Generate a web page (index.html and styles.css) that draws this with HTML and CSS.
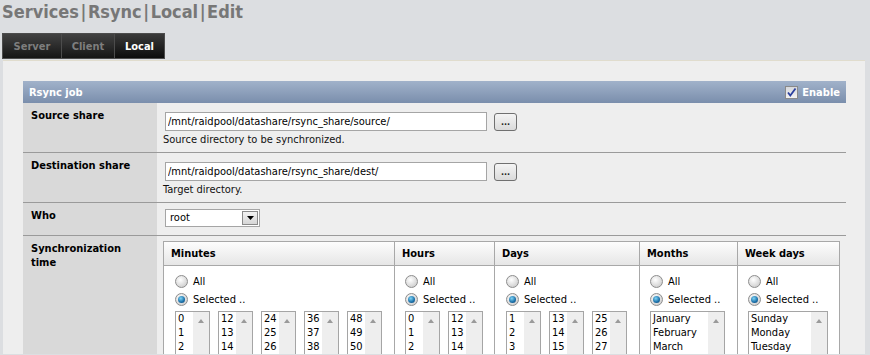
FILE: index.html
```html
<!DOCTYPE html>
<html>
  <head>
    <meta charset="UTF-8" />
    <title>Services | Rsync | Local | Edit</title>
    <link rel="stylesheet" href="styles.css">
  </head>
  <body>
    <h1 class="page-title">Services<span class="sep">|</span>Rsync<span class="sep">|</span>Local<span class="sep">|</span>Edit</h1>

    <div class="tabs">
      <a class="tab tab-server">Server</a>
      <a class="tab tab-client">Client</a>
      <a class="tab tab-local active">Local</a>
    </div>

    <div class="panel">
      <div class="form">
        <div class="form-header">
          <span>Rsync job</span>
          <span class="enable">
            <span class="checkbox">
              <svg width="11" height="11" viewBox="0 0 11 11"><path d="M2 5.5 L4.3 8.5 L9.5 1.5" fill="none" stroke="#2a3f9e" stroke-width="1.8"/></svg>
            </span>
            Enable
          </span>
        </div>

        <div class="row">
          <div class="label">Source share</div>
          <div class="value">
            <div class="path-line">
              <input type="text" class="path" value="/mnt/raidpool/datashare/rsync_share/source/">
              <button class="browse">...</button>
            </div>
            <div class="help">Source directory to be synchronized.</div>
          </div>
        </div>

        <div class="row">
          <div class="label">Destination share</div>
          <div class="value">
            <div class="path-line">
              <input type="text" class="path" value="/mnt/raidpool/datashare/rsync_share/dest/">
              <button class="browse">...</button>
            </div>
            <div class="help">Target directory.</div>
          </div>
        </div>

        <div class="row">
          <div class="label">Who</div>
          <div class="value value-who">
            <div class="select">
              <span class="select-text">root</span>
              <span class="select-btn">
                <svg width="7" height="4" viewBox="0 0 7 4"><path d="M0 0 H7 L3.5 4 Z" fill="#000"/></svg>
              </span>
            </div>
          </div>
        </div>

        <div class="row row-last">
          <div class="label">Synchronization time</div>
          <div class="value value-sched">
            <div class="sched">
              <div class="col col-minutes">
                <div class="col-head">Minutes</div>
                <div class="col-body">
                  <div class="opt"><span class="radio"></span>All</div>
                  <div class="opt"><span class="radio on"></span>Selected ..</div>
                  <div class="lists" data-kind="minutes"></div>
                </div>
              </div>
              <div class="col col-hours">
                <div class="col-head">Hours</div>
                <div class="col-body">
                  <div class="opt"><span class="radio"></span>All</div>
                  <div class="opt"><span class="radio on"></span>Selected ..</div>
                  <div class="lists" data-kind="hours"></div>
                </div>
              </div>
              <div class="col col-days">
                <div class="col-head">Days</div>
                <div class="col-body">
                  <div class="opt"><span class="radio"></span>All</div>
                  <div class="opt"><span class="radio on"></span>Selected ..</div>
                  <div class="lists" data-kind="days"></div>
                </div>
              </div>
              <div class="col col-months">
                <div class="col-head">Months</div>
                <div class="col-body">
                  <div class="opt"><span class="radio"></span>All</div>
                  <div class="opt"><span class="radio on"></span>Selected ..</div>
                  <div class="lists" data-kind="months"></div>
                </div>
              </div>
              <div class="col col-weekdays">
                <div class="col-head">Week days</div>
                <div class="col-body">
                  <div class="opt"><span class="radio"></span>All</div>
                  <div class="opt"><span class="radio on"></span>Selected ..</div>
                  <div class="lists" data-kind="weekdays"></div>
                </div>
              </div>
            </div>
          </div>
        </div>
      </div>
    </div>

    <script type="text/javascript">
      function range(from, to) {
        const out = [];
        for (let i = from; i <= to; i++) {
          out.push(String(i));
        }
        return out;
      }

      // each entry is one listbox
      const groups = {
        minutes: [range(0, 11), range(12, 23), range(24, 35), range(36, 47), range(48, 59)],
        hours: [range(0, 11), range(12, 23)],
        days: [range(1, 12), range(13, 24), range(25, 31)],
        months: [["January", "February", "March", "April", "May", "June", "July",
                  "August", "September", "October", "November", "December"]],
        weekdays: [["Sunday", "Monday", "Tuesday", "Wednesday", "Thursday", "Friday", "Saturday"]]
      };

      document.querySelectorAll(".lists").forEach((holder) => {
        groups[holder.dataset.kind].forEach((items) => {
          const box = document.createElement("div");
          box.className = "listbox";
          const sel = document.createElement("select");
          sel.multiple = true;
          sel.size = 3;
          items.forEach((item) => {
            const opt = document.createElement("option");
            opt.textContent = item;
            sel.appendChild(opt);
          });
          box.appendChild(sel);
          const bar = document.createElement("div");
          bar.className = "scrollbar";
          bar.innerHTML = '<span class="arrow"></span>';
          box.appendChild(bar);
          holder.appendChild(box);
        });
      });
    </script>
  </body>
</html>
```

FILE: styles.css
```css
body, html {
    margin: 0;
    padding: 0;
}

body {
    background-color: #dcdee1;
    font-family: "DejaVu Sans Condensed", "DejaVu Sans", sans-serif;
    font-size: 11px;
    color: #000;
}

.page-title {
    margin: 0;
    height: 33px;
    padding: 1px 0 0 2px;
    box-sizing: border-box;
    font-size: 18px;
    line-height: 22px;
    font-weight: bold;
    color: #777;
}

.page-title .sep {
    margin: 0 1.5px;
}

/* tabs */
.tabs {
    display: flex;
    margin-left: 2px;
    height: 26px;
}

.tab {
    display: flex;
    align-items: center;
    justify-content: center;
    box-sizing: border-box;
    height: 26px;
    border: 1px solid #4c4c4c;
    border-left: none;
    background: linear-gradient(#424242, #151515);
    color: #7e7e7e;
    font-weight: bold;
}

.tab-server {
    width: 60px;
    border-left: 1px solid #4c4c4c;
}

.tab-client {
    width: 53px;
}

.tab-local {
    width: 50px;
}

.tab.active {
    color: #fff;
    background: linear-gradient(#3a3a3a, #0c0c0c);
}

/* main panel */
.panel {
    margin: 1px 0 0 3px;
    width: 862px;
    height: 294px;
    box-sizing: border-box;
    padding: 20px 0 0 20px;
    background-color: #eeeeee;
    border-top: 1px solid #e0dccd;
}

.form {
    width: 823px;
}

.form-header {
    display: flex;
    justify-content: space-between;
    align-items: center;
    height: 22px;
    padding: 0 6px;
    background: linear-gradient(#a1b2ca, #7a8eac);
    color: #fff;
    font-weight: bold;
}

.enable {
    display: flex;
    align-items: center;
    gap: 4px;
}

.checkbox {
    display: flex;
    align-items: center;
    justify-content: center;
    width: 11px;
    height: 11px;
    border: 1px solid #8a8a8a;
    background: linear-gradient(#d6d8dc, #f2f2f2);
}

.row {
    display: grid;
    grid-template-columns: 134px 1fr;
    border-bottom: 1px solid #9a9a9a;
}

.row-last {
    border-bottom: none;
}

.label {
    background-color: #d9d9d9;
    font-weight: bold;
    line-height: 14px;
    padding: 6px 8px;
}

.value {
    padding: 9px 6px 5px;
}

.path-line {
    display: flex;
    align-items: center;
    gap: 7px;
}

.path {
    margin: 0 0 0 2px;
    width: 322px;
    height: 19px;
    box-sizing: border-box;
    padding: 0 2px;
    border: 1px solid #a5a5a5;
    background: #fff;
    font: inherit;
    color: #000;
}

.browse {
    width: 23px;
    height: 18px;
    padding: 0;
    border: 1px solid #707070;
    border-radius: 3px;
    background: linear-gradient(#f4f4f4, #dadada);
    font: inherit;
    font-size: 9px;
    line-height: 14px;
    font-weight: bold;
    color: #222;
}

.help {
    margin-top: 2px;
    line-height: 14px;
    color: #111;
}

.value-who {
    padding: 6px 6px 8px;
}

.select {
    display: flex;
    margin-left: 2px;
    width: 95px;
    height: 18px;
    box-sizing: border-box;
    border: 1px solid #a5a5a5;
    background: #fff;
}

.select-text {
    flex: 1;
    padding-left: 4px;
    line-height: 16px;
}

.select-btn {
    display: flex;
    align-items: center;
    justify-content: center;
    width: 16px;
    margin: 1px;
    box-sizing: border-box;
    border: 1px solid #8a8a8a;
    background: linear-gradient(#f2f2f2, #d6d6d6);
}

/* synchronization time */
.value-sched {
    padding: 5px 6px 0;
}

.sched {
    display: flex;
    border: 1px solid #a8a8a8;
    border-bottom: none;
    background: #fff;
}

.col {
    border-left: 1px solid #a8a8a8;
    box-sizing: border-box;
}

.col-minutes {
    width: 230px;
    border-left: none;
}

.col-hours {
    width: 100px;
}

.col-days {
    width: 145px;
}

.col-months {
    width: 98px;
}

.col-weekdays {
    width: 102px;
}

.col-head {
    height: 23px;
    line-height: 23px;
    padding-left: 7px;
    border-bottom: 1px solid #a8a8a8;
    background: linear-gradient(#fdfdfd, #e6e6e6);
    font-weight: bold;
}

.col-body {
    padding: 6px 0 0 10px;
}

.col-minutes .col-body,
.col-days .col-body {
    padding-left: 11px;
}

.opt {
    display: flex;
    align-items: center;
    gap: 5px;
    height: 18px;
}

.radio {
    width: 11px;
    height: 11px;
    border: 1px solid #8d8d8d;
    border-radius: 50%;
    background: radial-gradient(circle at 40% 35%, #ffffff, #d2d2d2 75%);
    display: flex;
    align-items: center;
    justify-content: center;
}

.radio.on::after {
    content: "";
    width: 7px;
    height: 7px;
    border-radius: 50%;
    background: radial-gradient(circle at 40% 35%, #7fd4f6, #1a6fa8 60%, #0d3f6a);
}

.lists {
    display: flex;
    gap: 8px;
    margin-top: 3px;
}

/* only the top three entries fit above the fold */
.listbox {
    display: flex;
    width: 35px;
    height: 44px;
    box-sizing: border-box;
    border: 1px solid #a5a5a5;
    border-bottom: none;
    background: #fff;
    overflow: hidden;
}

.col-months .listbox {
    width: 75px;
}

.col-weekdays .listbox {
    width: 80px;
}

.listbox select {
    flex: 1;
    min-width: 0;
    height: 43px;
    margin: 0;
    padding: 0;
    border: none;
    outline: none;
    overflow: hidden;
    background: #fff;
    font: inherit;
    color: #000;
}

.listbox option {
    height: 14px;
    line-height: 14px;
    padding: 0 0 0 2px;
    min-height: 14px;
}

.scrollbar {
    width: 16px;
    background: #eeeeee;
    display: flex;
    justify-content: center;
    padding-top: 7px;
    box-sizing: border-box;
}

.arrow {
    width: 0;
    height: 0;
    border-left: 3px solid transparent;
    border-right: 3px solid transparent;
    border-bottom: 4px solid #9a9a9a;
}
```
